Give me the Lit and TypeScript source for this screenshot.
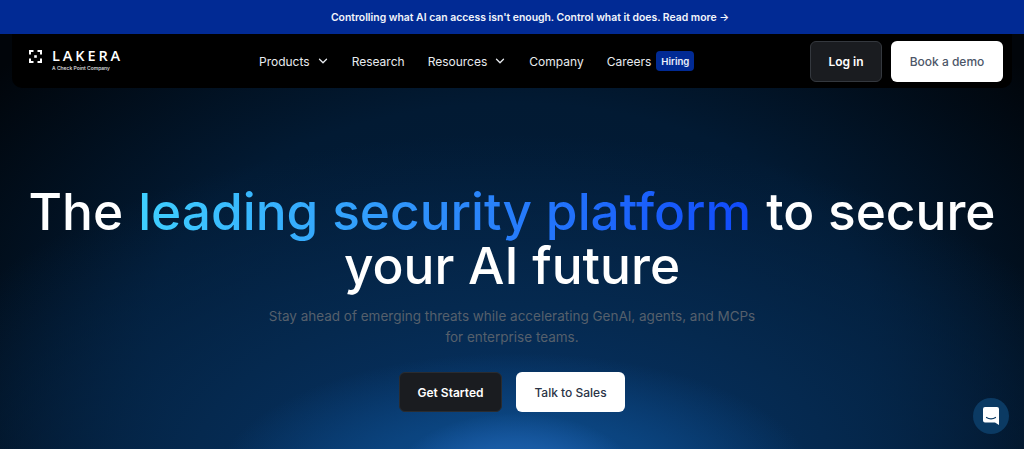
import { LitElement, html, css } from "lit";
import { customElement } from "lit/decorators.js";

const chevron = html`<svg class="chev" width="12" height="12" viewBox="0 0 12 12" fill="none" stroke="currentColor" stroke-width="1.300" stroke-linecap="round" stroke-linejoin="round"><path d="M2.500 4.300L6 7.800l3.500-3.500"/></svg>`;

@customElement("app-root")
export class AppRoot extends LitElement {
  static styles = css`
    :host { display: block; width: 100%; height: 449px; overflow: hidden; position: relative; font-family: Inter, "Liberation Sans", sans-serif; background: #01060c; color: #fff; }
    .banner { height: 34px; background: #012a94; display: flex; align-items: center; justify-content: center; font-size: 10.4px; font-weight: 600; color: #f2f5fb; padding-left: 36px; box-sizing: border-box; }
    .hero { height: 415px; position: relative; overflow: hidden; background:
      radial-gradient(ellipse 125px 70px at 516px 449px, #1e64b0 0%, #185aa3 55%, rgba(20,84,155,0) 100%),
      radial-gradient(ellipse 300px 130px at 516px 449px, #0e4c92 0%, #0b447f 50%, rgba(10,62,118,0) 100%),
      radial-gradient(ellipse 640px 340px at 512px 440px, #07356a 0%, #05294f 50%, rgba(3,30,60,0) 100%),
      radial-gradient(ellipse 660px 420px at 512px 300px, #021d3a 0%, #021a33 55%, rgba(1,8,16,0) 100%),
      #01050a; }
    .nav { margin: 0 12px; height: 54px; background: #000; border-radius: 0 0 10px 10px; display: flex; align-items: center; padding: 0 9px 0 17px; }
    .logo { width: 230px; display: flex; flex-direction: column; margin-top: -1px; }
    .logo-top { display: flex; align-items: center; gap: 10px; }
    .logo-name { font-family: "Open Sans", sans-serif; font-size: 14.5px; line-height: 14px; font-weight: 600; letter-spacing: 2.9px; color: #fff; }
    .logo-sub { font-size: 5px; line-height: 7px; margin: 2px 0 0 23px; color: #e4e6ea; font-weight: 500; }
    .links { display: flex; align-items: center; gap: 23px; font-size: 12px; color: #e8ebef; font-weight: 400; }
    .link { display: flex; align-items: center; gap: 7px; }
    .chev { color: #e8ebef; display: block; }
    .careers { gap: 5px; }
    .badge { background: #012a94; color: #eef2fb; font-size: 9.600px; font-weight: 600; height: 20px; padding: 0 5px; display: flex; align-items: center; border-radius: 4px; }
    .actions { margin-left: auto; display: flex; gap: 9px; }
    .btn { box-sizing: border-box; display: flex; align-items: center; justify-content: center; border-radius: 6px; font-size: 12px; }
    .dark { background: #1a1c20; border: 1px solid #34383e; color: #fff; font-weight: 600; }
    .light { background: #fff; color: #4c5668; font-weight: 500; }
    .nav .dark { width: 72px; height: 41px; }
    .nav .light { width: 112px; height: 41px; }
    .center { display: flex; flex-direction: column; align-items: center; text-align: center; }
    h1 { margin: 96px 0 0; font-size: 51.400px; line-height: 54px; font-weight: 450; color: #fff; width: 1010px; display: flex; flex-direction: column; align-items: center; }
    .line1 { display: flex; gap: 15px; white-space: nowrap; }
    .grad { background: linear-gradient(90deg, #3fd0ff 0%, #2d8cfb 50%, #1049fb 100%); -webkit-background-clip: text; background-clip: text; color: transparent; padding-bottom: 4px; }
    .line2 { line-height: 46px; margin-bottom: 4px; }
    p { margin: 14px 0 0; font-size: 13.500px; line-height: 21px; color: #56606c; width: 500px; }
    .cta { display: flex; gap: 14px; margin-top: 24px; }
    .cta .dark { width: 103px; height: 40px; border-color: #2a2c30; }
    .cta .light { width: 109px; height: 40px; color: #2a3346; }
    .chat { position: absolute; right: 15px; bottom: 15px; width: 36px; height: 36px; border-radius: 50%; background: #0b3a63; display: flex; align-items: center; justify-content: center; }
  `;
  render() {
    return html`
      <div class="banner">Controlling what AI can access isn't enough. Control what it does. Read more →</div>
      <div class="hero">
        <div class="nav">
          <div class="logo">
            <div class="logo-top">
              <svg width="13" height="13" viewBox="0 0 13 13" fill="none" stroke="#fff" stroke-width="2"><path d="M1 4.500V1h3.500M8.500 1H12v3.500M12 8.500V12H8.500M4.500 12H1V8.500"/><rect x="5.200" y="5.200" width="2.600" height="2.600" fill="#fff" stroke="none"/></svg>
              <span class="logo-name">LAKERA</span>
            </div>
            <span class="logo-sub">A Check Point Company</span>
          </div>
          <div class="links">
            <span class="link">Products ${chevron}</span>
            <span class="link">Research</span>
            <span class="link">Resources ${chevron}</span>
            <span class="link">Company</span>
            <span class="link careers">Careers <span class="badge">Hiring</span></span>
          </div>
          <div class="actions">
            <div class="btn dark">Log in</div>
            <div class="btn light">Book a demo</div>
          </div>
        </div>
        <div class="center">
          <h1><span class="line1"><span>The</span><span class="grad">leading security platform</span><span>to secure</span></span><span class="line2">your AI future</span></h1>
          <p>Stay ahead of emerging threats while accelerating GenAI, agents, and MCPs for enterprise teams.</p>
          <div class="cta">
            <div class="btn dark">Get Started</div>
            <div class="btn light">Talk to Sales</div>
          </div>
        </div>
        <div class="chat">
          <svg width="16" height="18" viewBox="0 0 16 18"><path d="M2 0h12a2 2 0 0 1 2 2v16l-4-2.500H2a2 2 0 0 1-2-2V2a2 2 0 0 1 2-2z" fill="#fff"/><path d="M3.500 10.500c2.500 1.800 6.500 1.800 9 0" fill="none" stroke="#0b3a63" stroke-width="1.200" stroke-linecap="round"/></svg>
        </div>
      </div>
    `;
  }
}
